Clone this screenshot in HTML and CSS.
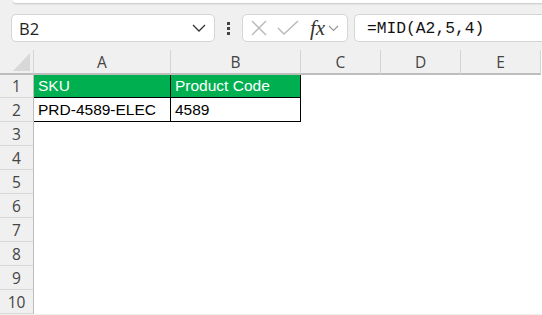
FILE: index.html
```html
<!DOCTYPE html>
<html lang="en">
<head>
    <meta charset="UTF-8">
    <meta name="viewport" content="width=device-width, initial-scale=1.0">
    <title>MID formula</title>
    <link rel="stylesheet" href="styles.css">
</head>
<body>
<div class="ribbon"></div>

<div class="formula-row">
    <div class="namebox">
        <span>B2</span>
        <svg class="chev" width="14" height="8" viewBox="0 0 14 8"><path d="M1 1 L7 7 L13 1" fill="none" stroke="#333" stroke-width="1.3"/></svg>
    </div>
    <div class="dots"><i></i><i></i><i></i></div>
    <div class="fxbox">
        <svg width="18" height="18" viewBox="0 0 18 18"><path d="M2 2 L16 16 M16 2 L2 16" stroke="#b8b8b8" stroke-width="1.4"/></svg>
        <svg width="22" height="16" viewBox="0 0 22 16"><path d="M1 8 L7 14 L21 1" fill="none" stroke="#b8b8b8" stroke-width="1.4"/></svg>
        <span class="fx">fx</span>
        <svg width="11" height="7" viewBox="0 0 11 7"><path d="M1 1 L5.5 5.5 L10 1" fill="none" stroke="#999" stroke-width="1.2"/></svg>
    </div>
    <div class="formula">=MID(A2,5,4)</div>
</div>

<div class="sheet">
    <div class="corner"><div class="tri"></div></div>
    <div class="colhead">A</div>
    <div class="colhead">B</div>
    <div class="colhead">C</div>
    <div class="colhead">D</div>
    <div class="colhead">E</div>

    <div class="rowhead first">1</div>
    <div class="cell green first bl">SKU</div>
    <div class="cell green first bl">Product Code</div>
    <div class="cell first"></div>
    <div class="cell first"></div>
    <div class="cell first"></div>

    <div class="rowhead">2</div>
    <div class="cell bl bb">PRD-4589-ELEC</div>
    <div class="cell bl bb">4589</div>
    <div class="cell"></div>
    <div class="cell"></div>
    <div class="cell"></div>

    <div class="rowhead">3</div>
    <div class="cell"></div><div class="cell"></div><div class="cell"></div><div class="cell"></div><div class="cell"></div>
    <div class="rowhead">4</div>
    <div class="cell"></div><div class="cell"></div><div class="cell"></div><div class="cell"></div><div class="cell"></div>
    <div class="rowhead">5</div>
    <div class="cell"></div><div class="cell"></div><div class="cell"></div><div class="cell"></div><div class="cell"></div>
    <div class="rowhead">6</div>
    <div class="cell"></div><div class="cell"></div><div class="cell"></div><div class="cell"></div><div class="cell"></div>
    <div class="rowhead">7</div>
    <div class="cell"></div><div class="cell"></div><div class="cell"></div><div class="cell"></div><div class="cell"></div>
    <div class="rowhead">8</div>
    <div class="cell"></div><div class="cell"></div><div class="cell"></div><div class="cell"></div><div class="cell"></div>
    <div class="rowhead">9</div>
    <div class="cell"></div><div class="cell"></div><div class="cell"></div><div class="cell"></div><div class="cell"></div>
    <div class="rowhead">10</div>
    <div class="cell"></div><div class="cell"></div><div class="cell"></div><div class="cell"></div><div class="cell"></div>
</div>
</body>
</html>
```

FILE: styles.css
```css
/* Page */
body {
    margin: 0;
    width: 542px;
    height: 315px;
    overflow: hidden;
    background: #f0f0f0;
    font-family: 'Liberation Sans', Arial, sans-serif;
}

.ribbon {
    height: 3px;
    margin-left: 13px;
    background: #ffffff;
    border-bottom-left-radius: 6px;
    box-shadow: 0 1px 2px rgba(0, 0, 0, 0.18);
}

/* Formula bar */
.formula-row {
    display: flex;
    align-items: center;
    height: 28px;
    margin-top: 11px;
}

.namebox {
    box-sizing: border-box;
    width: 204px;
    height: 28px;
    margin-left: 11px;
    padding: 0 8px 0 7px;
    display: flex;
    align-items: center;
    justify-content: space-between;
    background: #fff;
    border: 1px solid #d5d5d5;
    border-radius: 5px;
    font-family: 'Open Sans', sans-serif;
    font-size: 16.5px;
    color: #222;
}

.dots {
    width: 27px;
    display: flex;
    flex-direction: column;
    align-items: center;
    gap: 2px;
}

.dots i {
    width: 3px;
    height: 3px;
    background: #444;
}

.fxbox {
    box-sizing: border-box;
    width: 106px;
    height: 28px;
    padding: 0 5px 0 7px;
    display: flex;
    align-items: center;
    gap: 9px;
    background: #fff;
    border: 1px solid #d5d5d5;
    border-radius: 5px;
}

.fx {
    font-family: 'Liberation Serif', serif;
    font-style: italic;
    font-size: 21px;
    color: #333;
    margin-left: 2px;
    margin-right: -6px;
}

.formula {
    box-sizing: border-box;
    flex: 1;
    height: 28px;
    margin-left: 6px;
    padding-left: 12px;
    display: flex;
    align-items: center;
    background: #fff;
    border: 1px solid #d5d5d5;
    border-right: none;
    border-radius: 5px 0 0 5px;
    font-family: 'Liberation Mono', monospace;
    font-size: 16.3px;
    color: #111;
}

/* Sheet grid */
.sheet {
    margin-top: 8px;
    display: grid;
    grid-template-columns: 34px 137px 130px 80px 80px 80px;
    grid-template-rows: 25px 23px repeat(9, 24px);
    background: #fff;
}

.corner,
.colhead {
    box-sizing: border-box;
    background: #f0f0f0;
    border-bottom: 2px solid #bdbdbd;
    border-right: 1px solid #d4d4d4;
}

.corner {
    display: flex;
    justify-content: flex-end;
    align-items: flex-end;
    padding: 0 3px 2px 0;
}

.tri {
    width: 0;
    height: 0;
    border-left: 17px solid transparent;
    border-bottom: 18px solid #d8d8d8;
}

.colhead {
    display: flex;
    align-items: center;
    justify-content: center;
    font-family: 'Open Sans', sans-serif;
    font-size: 15.5px;
    color: #444;
}

.rowhead {
    box-sizing: border-box;
    background: #f0f0f0;
    border-right: 1px solid #bdbdbd;
    border-bottom: 1px solid #d8d8d8;
    display: flex;
    align-items: center;
    justify-content: center;
    font-family: 'Open Sans', sans-serif;
    font-size: 15.5px;
    color: #444;
}

.cell {
    box-sizing: border-box;
    padding-left: 4px;
    display: flex;
    align-items: center;
    font-size: 15.5px;
    color: #000;
    white-space: nowrap;
}

.cell.green {
    background: #00b050;
    color: #fff;
}

.cell.bl {
    border-right: 1px solid #000;
}

.cell.green.first {
    border-bottom: 1px solid #000;
}

.cell.bb {
    border-bottom: 1px solid #000;
}
```
